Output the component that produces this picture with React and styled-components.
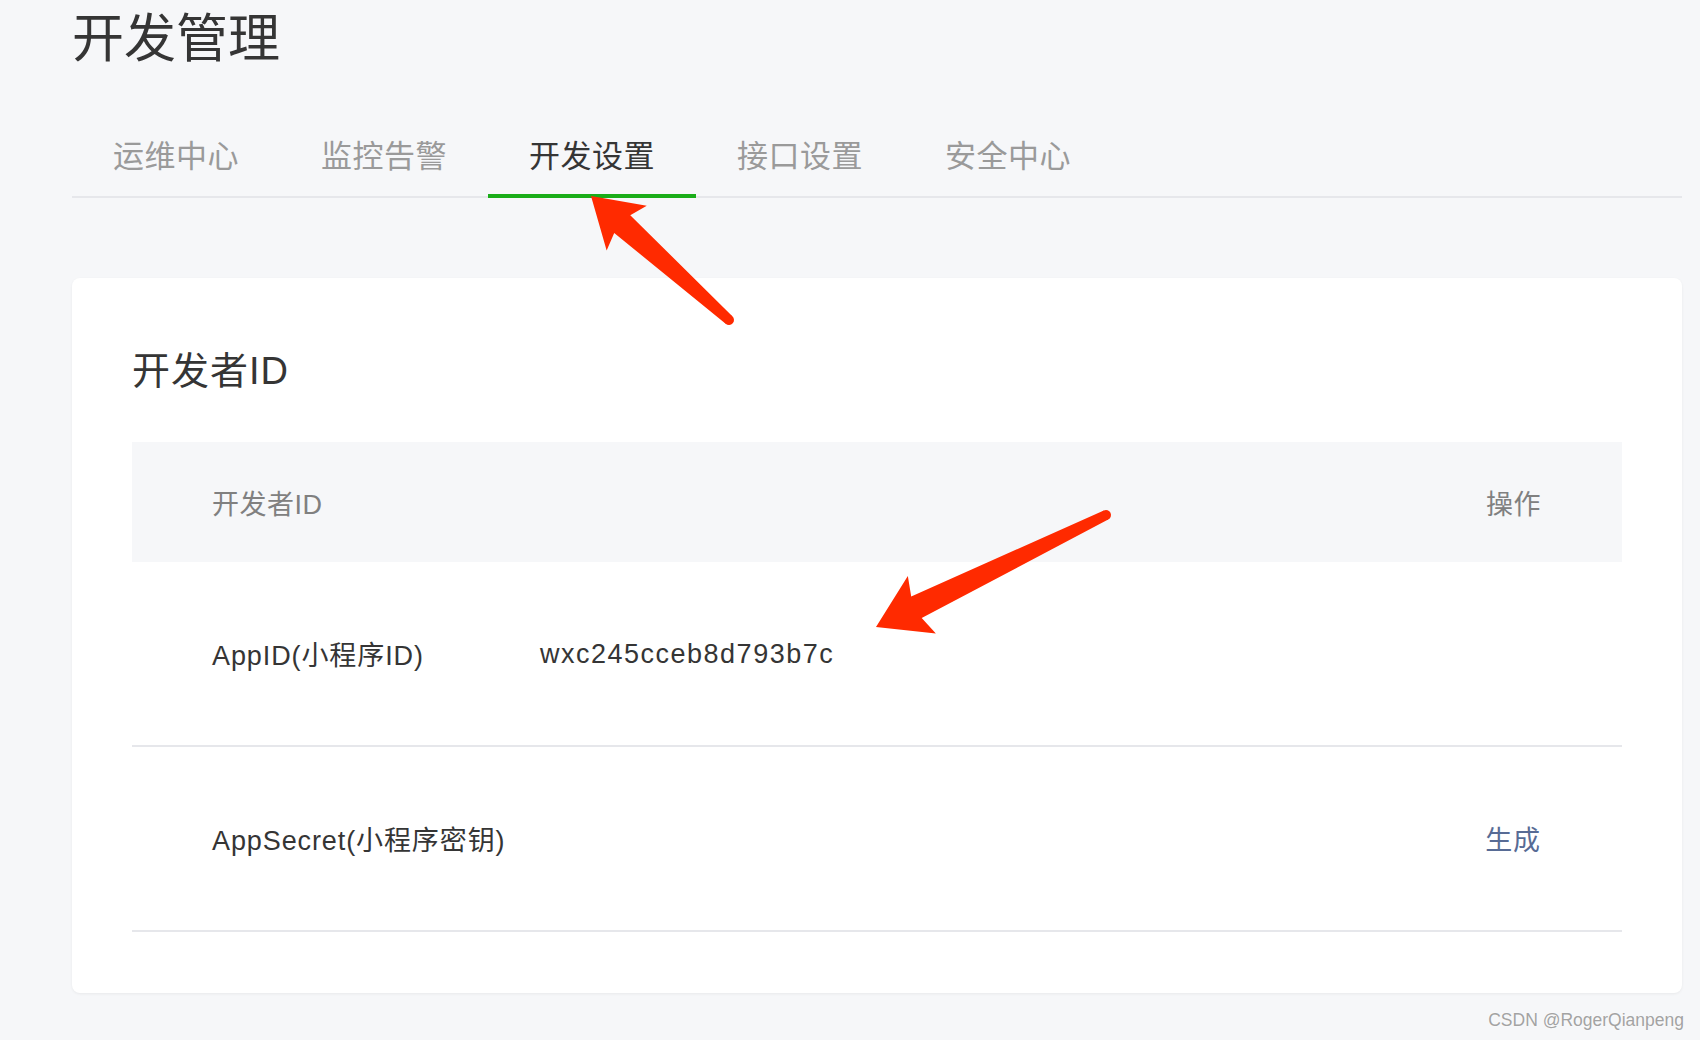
import styled, { createGlobalStyle } from 'styled-components';

const GlobalStyle = createGlobalStyle`
  html, body {
    margin: 0;
    padding: 0;
    background-color: #f6f7f9;
  }
  body {
    font-family: 'Liberation Sans', 'Noto Sans CJK SC', sans-serif;
    color: #353535;
  }
`;

const Page = styled.div`
  position: relative;
  width: 1700px;
  height: 1040px;
  box-sizing: border-box;
  padding: 0 18px 0 72px;
  overflow: hidden;
`;

const PageTitle = styled.h1`
  margin: 0;
  font-size: 52px;
  line-height: 78px;
  font-weight: 400;
  color: #353535;
`;

const TabBar = styled.nav`
  display: flex;
  margin-top: 32px;
  border-bottom: 2px solid #e6e7eb;
`;

const Tab = styled.div`
  position: relative;
  width: 208px;
  height: 86px;
  display: flex;
  align-items: center;
  justify-content: center;
  font-size: 31px;
  letter-spacing: 0.5px;
  color: ${(p) => (p.$active ? '#353535' : '#9a9a9a')};
  cursor: pointer;

  &::after {
    content: '';
    position: absolute;
    left: 0;
    right: 0;
    bottom: -2px;
    height: 4px;
    background-color: ${(p) => (p.$active ? '#1aad19' : 'transparent')};
  }
`;

const Card = styled.section`
  margin-top: 80px;
  height: 715px;
  box-sizing: border-box;
  padding: 65px 60px 0;
  background-color: #ffffff;
  border-radius: 8px;
  box-shadow: 0 1px 3px rgba(0, 0, 0, 0.06);
`;

const CardTitle = styled.h2`
  margin: 0;
  font-size: 38px;
  line-height: 56px;
  font-weight: 400;
  letter-spacing: 1px;
  color: #353535;
`;

const Table = styled.div`
  margin-top: 43px;
`;

const Row = styled.div`
  display: grid;
  grid-template-columns: 328px 1fr auto;
  align-items: center;
  padding: 0 81px 0 80px;
  height: ${(p) => (p.$head ? '120px' : '183px')};
  background-color: ${(p) => (p.$head ? '#f6f7f9' : 'transparent')};
  border-bottom: ${(p) => (p.$head ? 'none' : '2px solid #e6e7eb')};
  font-size: 27px;
  color: ${(p) => (p.$head ? '#808080' : '#353535')};
`;

const HeadCell = styled.div`
  grid-column: ${(p) => p.$span || 'auto'};
  letter-spacing: 0.5px;
`;

const Cell = styled.div`
  white-space: nowrap;
  letter-spacing: ${(p) => (p.$mono ? '1.5px' : '0.9px')};
  padding-top: ${(p) => (p.$mono ? '2px' : '0')};
`;

const Link = styled.a`
  color: #576b95;
  cursor: pointer;
  text-decoration: none;
`;

const Watermark = styled.div`
  position: absolute;
  right: 16px;
  bottom: 9px;
  font-size: 17.5px;
  color: #a3a3a3;
  text-shadow: 0 0 2px #ffffff;
`;

const Overlay = styled.svg`
  position: absolute;
  left: 0;
  top: 0;
  pointer-events: none;
`;

function Arrow({ tip, tail, head = 51, wing = 32 }) {
  const dx = tail[0] - tip[0];
  const dy = tail[1] - tip[1];
  const len = Math.sqrt(dx * dx + dy * dy);
  const angle = (Math.atan2(dy, dx) * 180) / Math.PI;
  const notch = head - 6;
  const points = [
    [0, 0],
    [head, -wing],
    [notch, -12],
    [len, -5],
    [len, 5],
    [notch, 12],
    [head, wing],
  ]
    .map((p) => p.join(','))
    .join(' ');
  return (
    <g transform={`translate(${tip[0]} ${tip[1]}) rotate(${angle})`} fill='#ff2a00'>
      <polygon points={points} />
      <circle cx={len} cy={0} r={5} />
    </g>
  );
}

const tabs = ['运维中心', '监控告警', '开发设置', '接口设置', '安全中心'];

export default function App() {
  return (
    <>
      <GlobalStyle />
      <Page>
        <PageTitle>开发管理</PageTitle>
        <TabBar>
          {tabs.map((t) => (
            <Tab key={t} $active={t === '开发设置'}>
              {t}
            </Tab>
          ))}
        </TabBar>

        <Card>
          <CardTitle>开发者ID</CardTitle>
          <Table>
            <Row $head>
              <HeadCell $span='1 / 3'>开发者ID</HeadCell>
              <HeadCell>操作</HeadCell>
            </Row>
            <Row>
              <Cell>AppID(小程序ID)</Cell>
              <Cell $mono>wxc245cceb8d793b7c</Cell>
              <Cell />
            </Row>
            <Row>
              <Cell>AppSecret(小程序密钥)</Cell>
              <Cell />
              <Cell>
                <Link>生成</Link>
              </Cell>
            </Row>
          </Table>
        </Card>

        <Overlay width='1700' height='1040' viewBox='0 0 1700 1040'>
          <Arrow tip={[591, 196]} tail={[729, 320]} head={48} wing={30} />
          <Arrow tip={[876, 627]} tail={[1106, 515]} />
        </Overlay>

        <Watermark>CSDN @RogerQianpeng</Watermark>
      </Page>
    </>
  );
}
